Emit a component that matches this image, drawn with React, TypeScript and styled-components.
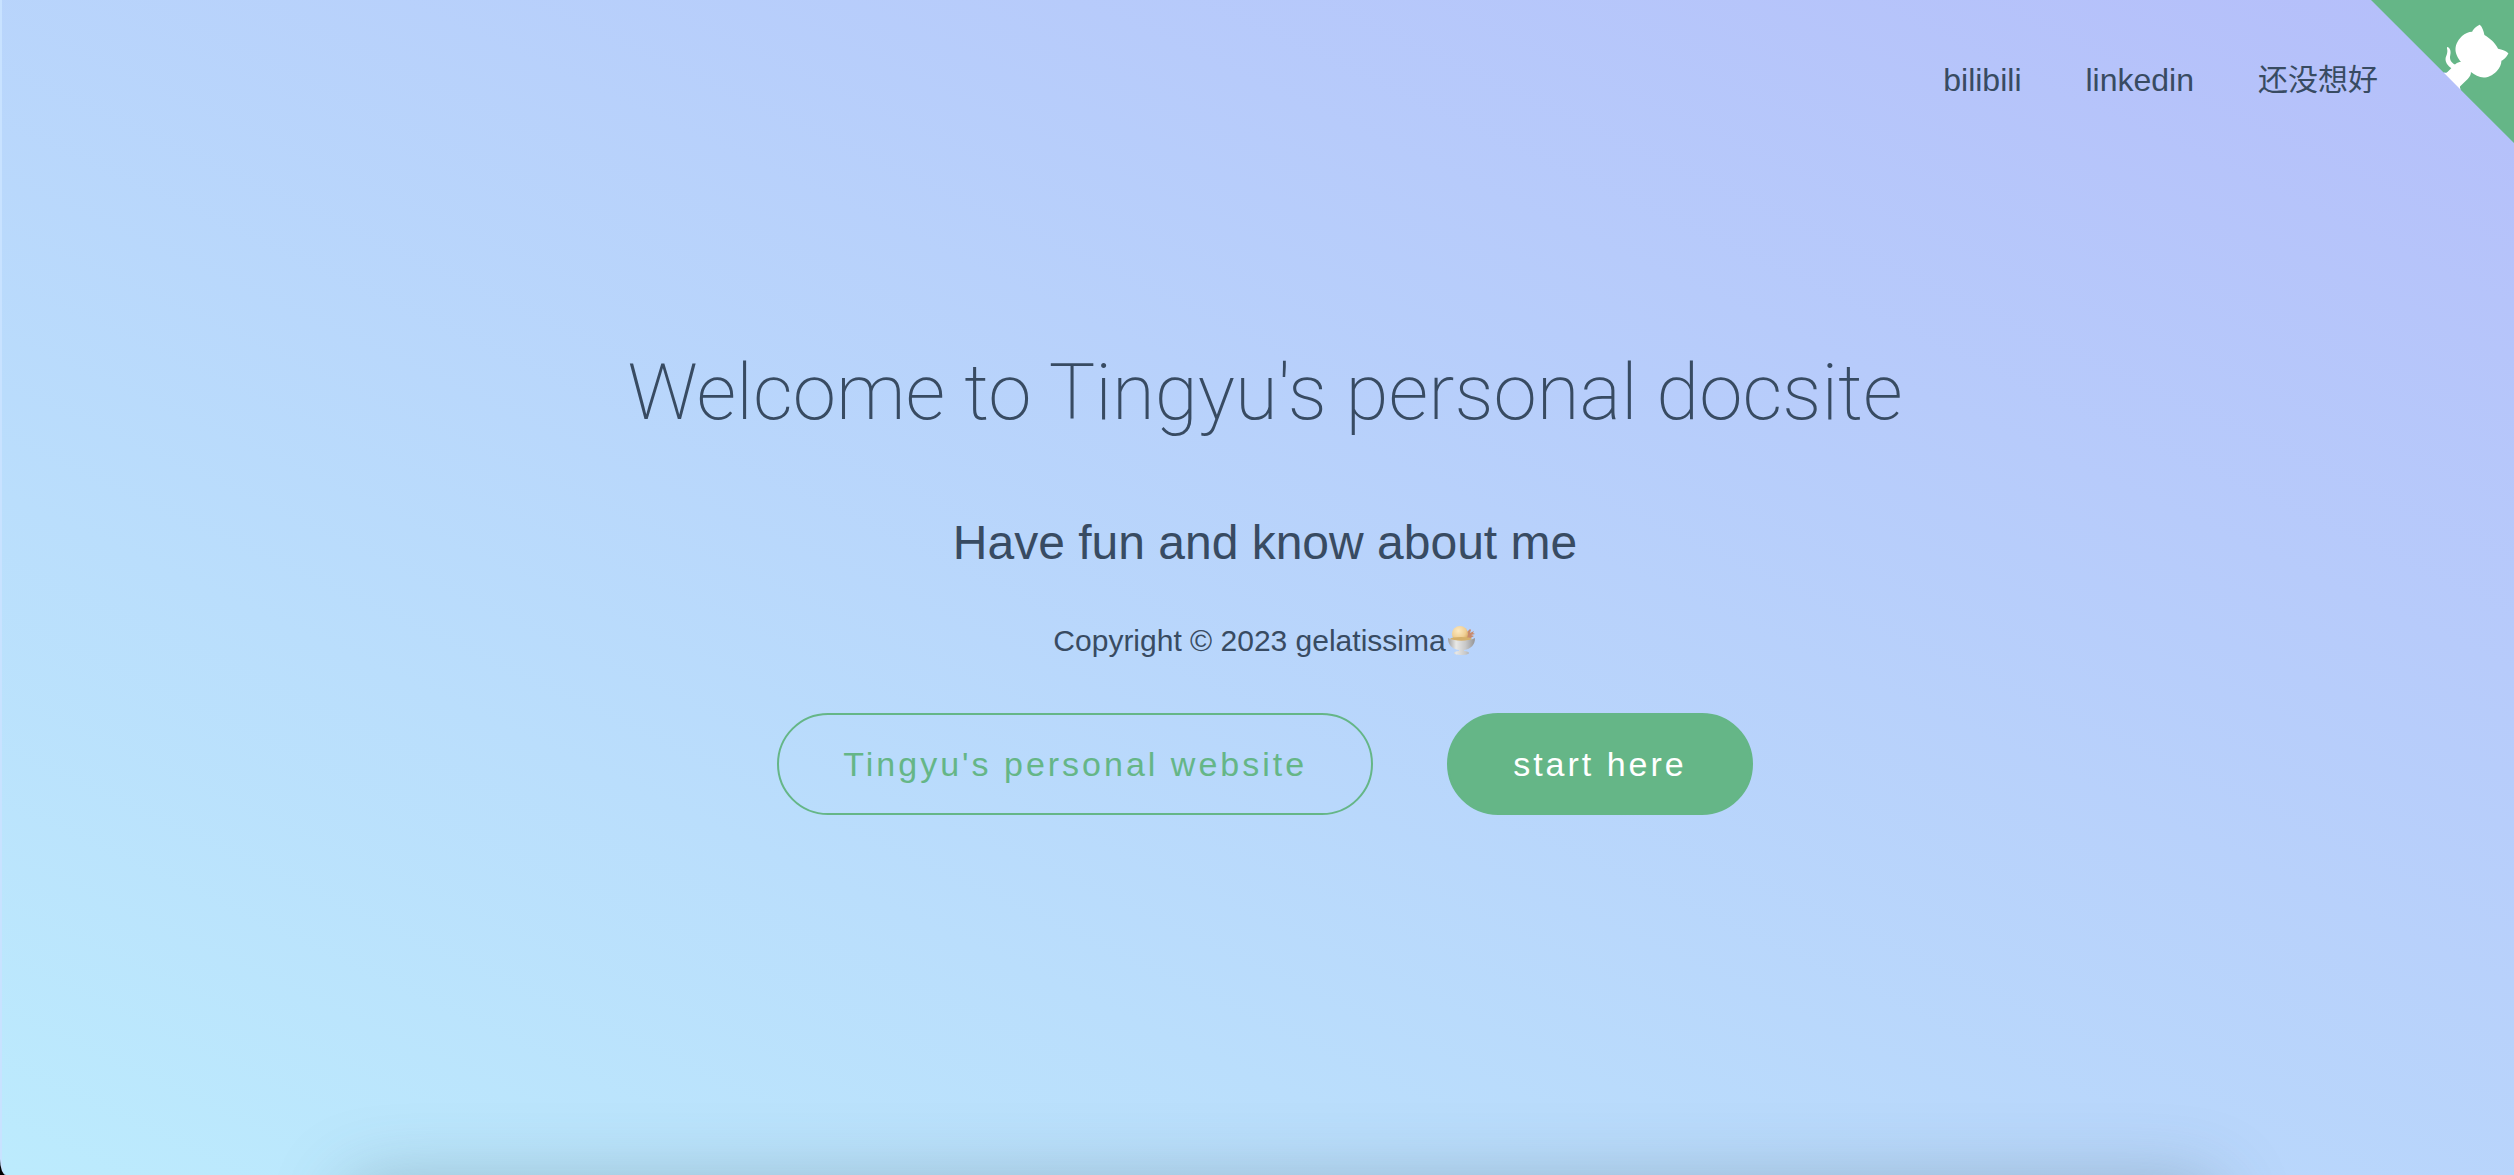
import React from "react";
import styled, { createGlobalStyle } from "styled-components";

const green = "#65b687";
const ink = "#384b62";

const GlobalStyle = createGlobalStyle`
  *, *::before, *::after { box-sizing: border-box; }
  body {
    margin: 0;
    overflow: hidden;
    color: ${ink};
    font-family: "Liberation Sans", "Noto Sans CJK SC", sans-serif;
  }
`;

const Frame = styled.div`
  position: relative;
  min-height: 100vh;
  overflow: hidden;
  background: #000;
`;

const Cover = styled.section`
  display: flex;
  flex-direction: column;
  width: calc(100% + 14px);
  min-height: 100vh;
  background: linear-gradient(to left bottom, #b5befa 0%, #bcebfd 100%);
  border-left: 2px solid #c8e2ff;
  border-bottom-left-radius: 6px 16px;
`;

const Nav = styled.nav`
  display: flex;
  justify-content: flex-end;
  gap: 64px;
  padding: 60px 150px 0 0;
`;

const NavLink = styled.a`
  color: inherit;
  font-size: 32px;
  line-height: 40px;
  text-decoration: none;

  &:lang(zh) {
    font-size: 30px;
  }
`;

const Main = styled.main`
  display: flex;
  flex: 1;
  flex-direction: column;
  align-items: center;
  justify-content: center;
  gap: 52px;
  padding-bottom: 116px;
  text-align: center;
`;

const Title = styled.h1`
  margin: 0 0 24px;
  font-family: Roboto, "Liberation Sans", sans-serif;
  font-size: 78px;
  font-weight: 200;
  line-height: 96px;
`;

const Tagline = styled.p`
  margin: 0;
  font-size: 48px;
  line-height: 52px;
`;

const Copyright = styled.p`
  display: flex;
  align-items: center;
  margin: 0;
  font-size: 30px;
  line-height: 40px;
`;

const Actions = styled.div`
  display: flex;
  flex-wrap: wrap;
  justify-content: center;
  gap: 74px;
`;

const Action = styled.a<{ $filled?: boolean }>`
  padding: 0 64px;
  border: 2px solid ${green};
  border-radius: 51px;
  background: ${(p) => (p.$filled ? green : "transparent")};
  color: ${(p) => (p.$filled ? "#fff" : green)};
  font-size: 34px;
  letter-spacing: 3px;
  line-height: 98px;
  text-decoration: none;
`;

const Corner = styled.a`
  position: absolute;
  top: -1px;
  right: -16px;
  color: #fff;

  svg {
    display: block;
    width: 160px;
    height: 160px;
    fill: ${green};
  }
`;

const DockShadow = styled.div`
  position: absolute;
  top: 100%;
  left: 14%;
  right: 12%;
  height: 100px;
  border-radius: 20px;
  box-shadow: 0 12px 72px 4px rgba(70, 90, 100, 0.34);
`;

const Sundae = styled.svg`
  width: 30px;
  height: 30px;
  margin-left: 1px;
`;

function IceCream() {
  return (
    <Sundae viewBox="0 0 30 30" role="img" aria-label="ice cream">
      <defs>
        <radialGradient id="scoop" cx="0.4" cy="0.3" r="0.75">
          <stop offset="0" stopColor="#fdeac2" />
          <stop offset="0.6" stopColor="#f0cf94" />
          <stop offset="1" stopColor="#d3a25a" />
        </radialGradient>
        <linearGradient id="glass">
          <stop offset="0" stopColor="#a0a0a0" />
          <stop offset="0.3" stopColor="#e8e8e6" />
          <stop offset="0.65" stopColor="#c8c8c8" />
          <stop offset="1" stopColor="#949496" />
        </linearGradient>
      </defs>
      <path d="M19 7l4-4 1 1-1 3 4-2-1 2 2 1-4 1 3 1-5 3-4-2z" fill="#c88a6c" />
      <circle cx="13" cy="8" r="8" fill="url(#scoop)" />
      <ellipse cx="14" cy="13" rx="11" ry="2" fill="#d6b06a" />
      <path
        d="M1 12c7 3.500 20 3.500 27 0 0 7-4 11-11 12v1c3 .4 5 .9 5 2s-3 2-7.500 2-7.500-.9-7.500-2 2-1.600 5-2v-1c-7-1-11-5-11-12z"
        fill="url(#glass)"
      />
    </Sundae>
  );
}

export default function App() {
  return (
    <>
      <GlobalStyle />
      <Frame>
        <Cover>
          <Nav>
            <NavLink href="#bilibili">bilibili</NavLink>
            <NavLink href="#linkedin">linkedin</NavLink>
            <NavLink href="#todo" lang="zh">还没想好</NavLink>
          </Nav>
          <Main>
            <Title>Welcome to Tingyu's personal docsite</Title>
            <Tagline>Have fun and know about me</Tagline>
            <Copyright>
              Copyright © 2023 gelatissima
              <IceCream />
            </Copyright>
            <Actions>
              <Action href="#website">Tingyu's personal website</Action>
              <Action href="#start" $filled>start here</Action>
            </Actions>
          </Main>
        </Cover>
        <Corner href="#github" aria-label="View source on Github">
          <svg viewBox="0 0 250 250" aria-hidden="true">
            <path d="M0,0 L115,115 L130,115 L142,142 L250,250 L250,0 Z" />
            <path
              fill="currentColor"
              d="M128.3,109.0 C113.8,99.7 119.0,89.6 119.0,89.6 C122.0,82.7 120.5,78.6 120.5,78.6 C119.2,72.0 123.4,76.3 123.4,76.3 C127.3,80.9 125.5,87.3 125.5,87.3 C122.9,97.6 130.6,101.9 134.4,103.2"
            />
            <path
              fill="currentColor"
              d="M115.0,115.0 C114.9,115.1 118.7,116.5 119.8,115.4 L133.7,101.6 C136.9,99.2 139.9,98.4 142.2,98.6 C133.8,88.0 127.5,74.4 143.8,58.0 C148.5,53.4 154.0,51.2 159.7,51.0 C160.3,49.4 163.2,43.6 171.4,40.1 C171.4,40.1 176.1,42.5 178.8,56.2 C183.1,58.6 187.2,61.8 190.9,65.4 C194.5,69.0 197.7,73.2 200.1,77.6 C213.8,80.2 216.3,84.9 216.3,84.9 C212.7,93.1 206.9,96.0 205.4,96.6 C205.1,102.4 203.0,107.8 198.3,112.5 C181.9,128.9 168.3,122.5 157.7,114.1 C157.9,116.9 156.7,120.9 152.7,124.9 L141.0,136.5 C139.8,137.7 141.6,141.9 141.8,141.8 Z"
            />
          </svg>
        </Corner>
        <DockShadow />
      </Frame>
    </>
  );
}
